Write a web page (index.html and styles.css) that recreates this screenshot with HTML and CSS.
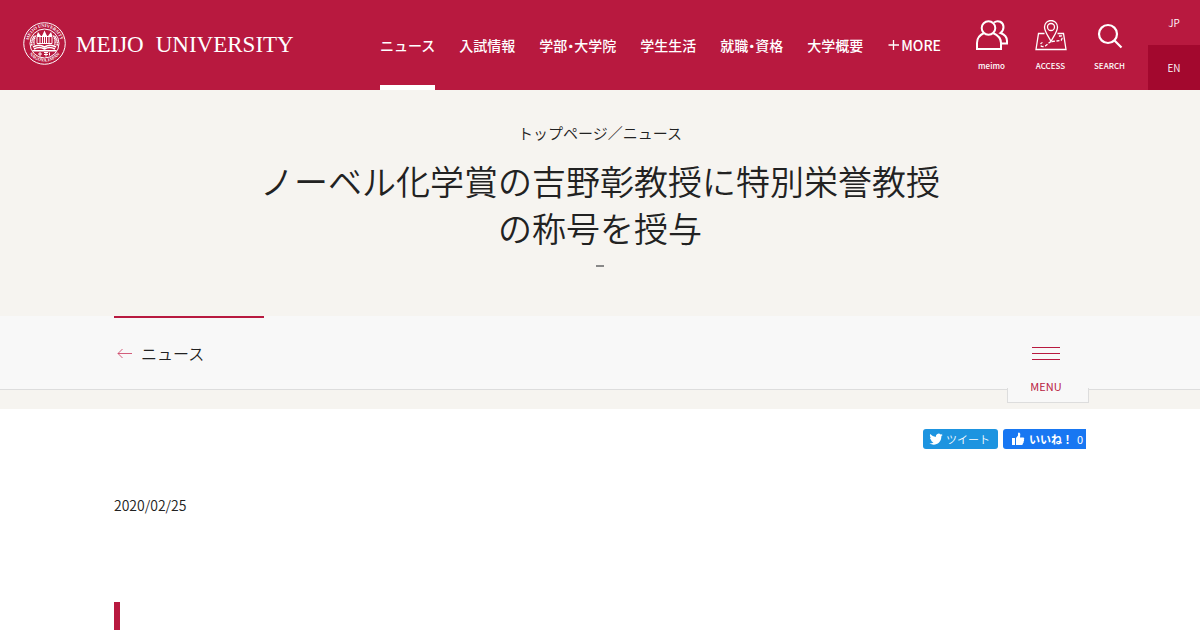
FILE: index.html
```html
<!DOCTYPE html>
<html lang="ja">
<head>
    <meta charset="UTF-8">
    <meta name="viewport" content="width=device-width, initial-scale=1.0">
    <title>ノーベル化学賞の吉野彰教授に特別栄誉教授の称号を授与</title>
    <link rel="stylesheet" href="styles.css">
</head>
<body>
    <!-- header -->
    <header class="header">
        <a href="#" class="logo">
            <svg class="seal" viewBox="0 0 86 86" aria-hidden="true">
                <defs>
                    <path id="ringTop" d="M12.5 52 A32 32 0 1 1 73.5 52"/>
                    <path id="ringBottom" d="M13 64 A37 37 0 0 0 73 64"/>
                </defs>
                <g fill="none" stroke="#fff">
                    <circle cx="43" cy="43" r="41.500" stroke-width="2"/>
                    <circle cx="43" cy="43" r="29" stroke-width="2"/>
                    <path d="M22 29 Q16 38 18 48 M64 29 Q70 38 68 48 M25 27 Q20 38 23 47 M61 27 Q66 38 63 47" stroke-width="3" stroke-dasharray="3 1"/>
                    <path d="M28 29 H58 V43 H28 Z M34 29 V43 M39 27 V43 M43 22 V43 M47 27 V43 M52 29 V43" stroke-width="2"/>
                    <path d="M20 50 Q32 43 43 50 Q54 43 66 50 M22 54 Q33 48 43 54 Q53 48 64 54" stroke-width="3"/>
                    <path d="M30 64 H38 M34 60 V69 M42 61 H50 M42 65 H50 M46 60 V69 M53 61 V67" stroke-width="2"/>
                </g>
                <path d="M43 17 L38 28 H48 Z M30 20 L27 28 H36 Z M56 20 L50 28 H59 Z M18 56 H68 L65 59 H21 Z" fill="#fff"/>
                <g class="seal-text">
                    <text><textPath href="#ringTop" startOffset="50%">MEIJO UNIVERSITY</textPath></text>
                    <text><textPath href="#ringBottom" startOffset="50%">NAGOYA JAPAN</textPath></text>
                </g>
            </svg>
            <span class="logo-text"><span>MEIJO</span> <span>UNIVERSITY</span></span>
        </a>
        <nav class="nav">
            <a href="#" class="current">ニュース</a>
            <a href="#">入試情報</a>
            <a href="#">学部・大学院</a>
            <a href="#">学生生活</a>
            <a href="#">就職・資格</a>
            <a href="#">大学概要</a>
            <a href="#" class="more">
                <svg width="12" height="12" viewBox="0 0 12 12" aria-hidden="true"><path d="M6.500 1V11M1.500 6H12" stroke="#fff" stroke-width="1.300"/></svg>
                MORE
            </a>
        </nav>
        <div class="tools">
            <a href="#">
                <svg width="32" height="32" viewBox="0 0 32 32" fill="none" stroke="#fff" stroke-width="2" aria-hidden="true">
                    <circle cx="12.500" cy="8" r="6.800"/>
                    <path d="M8 13 C3.500 15 1 18.500 1 23 V29 H25 V23 C25 18.500 21.500 15 17 13"/>
                    <path d="M18 2.500 C22 -0.500 27.500 2 27.500 7 C27.500 9.500 26.500 11.500 24.500 13 C29 14.500 31 17.500 31 21 V23.500 H25"/>
                </svg>
                meimo
            </a>
            <a href="#">
                <svg width="32" height="32" viewBox="0 0 32 32" fill="none" stroke="#fff" stroke-width="1.300" aria-hidden="true">
                    <path d="M9.500 13.500 H3.500 L1 29.500 H31 L28.500 13.500 H22.500"/>
                    <path d="M16 21.500 C14 17 9.500 12 9.500 7 A6.500 6.500 0 0 1 22.500 7 C22.500 12 18 17 16 21.500 Z"/>
                    <circle cx="16" cy="7" r="3.500"/>
                    <path d="M16 21.500 C13 23 12 26 8.500 26.500 C5 27 4.500 23.500 7.500 22.500 M17 21.500 L26 20.500 Q28 18 26.500 16 H23" stroke-dasharray="3 1.500"/>
                </svg>
                ACCESS
            </a>
            <a href="#">
                <svg width="32" height="32" viewBox="0 0 32 32" fill="none" stroke="#fff" stroke-width="2.200" aria-hidden="true">
                    <circle cx="14" cy="14" r="9"/>
                    <path d="M20.500 20.500 L27.500 27.500"/>
                </svg>
                SEARCH
            </a>
        </div>
        <div class="lang">
            <a href="#">JP</a>
            <a href="#" class="en">EN</a>
        </div>
    </header>

    <!-- title -->
    <section class="hero">
        <p class="breadcrumb"><a href="#">トップページ</a>／<a href="#">ニュース</a></p>
        <h1 class="title">ノーベル化学賞の吉野彰教授に特別栄誉教授の称号を授与</h1>
        <span class="dash"></span>
    </section>

    <!-- local nav -->
    <div class="local">
        <div class="local-bar">
            <div class="inner local-inner">
                <a href="#" class="back">
                    <svg width="16" height="10" viewBox="0 0 16 10" fill="none" stroke="#c9365a" stroke-width=".8" aria-hidden="true"><path d="M15 5.500H1M5.500 1L1 5.500L5.500 10"/></svg>
                    ニュース
                </a>
                <button type="button" class="menu">
                    <span class="menu-lines"></span>
                    MENU
                </button>
            </div>
        </div>
    </div>

    <!-- article -->
    <main class="inner article">
        <div class="share">
            <a href="#" class="tweet">
                <svg width="14" height="14" viewBox="0 0 24 24" fill="#fff" aria-hidden="true"><path d="M23.600 4.900c-.8.400-1.700.6-2.700.8 1-.6 1.700-1.500 2-2.600-.9.500-1.900.9-3 1.100A4.700 4.700 0 0 0 11.900 8.500C8 8.300 4.500 6.400 2.200 3.600c-1.200 2.100-.6 4.900 1.500 6.300-.8 0-1.500-.2-2.100-.6 0 2.200 1.500 4.300 3.800 4.700-.7.200-1.400.2-2.100.1.600 1.900 2.300 3.200 4.400 3.300a9.500 9.500 0 0 1-7 2C9.500 25.200 21.500 19.500 21.200 7.300c.9-.7 1.800-1.500 2.400-2.400z"/></svg>
                ツイート
            </a>
            <button type="button" class="like">
                <svg width="14" height="14" viewBox="0 0 14 14" fill="#fff" aria-hidden="true"><path d="M1 6h3v7H1zM5 6l2-2.500V1.500Q7 .5 8 .5t1.300 1.500L9 5.500h3.500q1.300 1 .3 2.300.8 1-.3 1.900.5 1-.6 1.700 0 1.600-1.400 1.600H5z"/></svg>
                <b>いいね！</b>
                <span>0</span>
            </button>
        </div>
        <time class="date" datetime="2020-02-25">2020/02/25</time>
        <div class="headline"></div>
    </main>
</body>
</html>
```
FILE: styles.css
```css
* {
    margin: 0;
    padding: 0;
    box-sizing: border-box;
}

body {
    font-family: "Noto Sans CJK JP", sans-serif;
    font-size: 14px;
    font-weight: 350;
    color: #222;
    background: #fff;
}

a {
    color: inherit;
    text-decoration: none;
}

button {
    border: none;
    font-family: inherit;
    cursor: pointer;
}

svg {
    display: block;
    flex-shrink: 0;
}

.inner {
    width: 81%;
    margin: 0 auto;
}

/* header */
.header {
    display: flex;
    height: 90px;
    padding-left: 23px;
    background: #b8193f;
    color: #fff;
    white-space: nowrap;
}

.logo {
    display: flex;
    align-items: center;
    gap: 10px;
}

.seal {
    width: 43px;
    height: 43px;
    margin-bottom: 3px;
    overflow: visible;
}

.seal-text {
    font-family: "Liberation Serif", serif;
    font-size: 9px;
    font-weight: bold;
    fill: #fff;
    text-anchor: middle;
}

.logo-text {
    display: flex;
    gap: 12px;
    font-family: "Liberation Serif", serif;
    font-size: 23px;
}

.nav {
    display: flex;
    gap: 24px;
    margin-left: auto;
    margin-right: 21px;
    font-weight: 500;
    font-feature-settings: "halt";
}

.nav a {
    display: flex;
    align-items: center;
    padding-top: 5px;
    border-bottom: 5px solid transparent;
}

.nav .current {
    border-color: #fff;
}

.nav .more {
    gap: 2px;
}

.tools {
    display: flex;
    padding-right: 9px;
}

.tools a {
    display: flex;
    flex-direction: column;
    align-items: center;
    gap: 6px;
    width: 59px;
    padding-top: 20px;
    font-size: 8px;
    font-weight: 500;
    line-height: 16px;
}

.lang {
    width: 52px;
    font-size: 10px;
    line-height: 45px;
    text-align: center;
}

.lang a {
    display: block;
}

.lang .en {
    background: #a3082e;
}

/* title */
.hero {
    padding: 32px 20px 49px;
    background: #f6f4f0;
    text-align: center;
}

.breadcrumb {
    font-size: 15px;
    line-height: 22px;
}

.title {
    max-width: 700px;
    margin: 13px auto 14px;
    font-size: 34px;
    font-weight: 350;
    line-height: 47px;
}

.dash {
    display: block;
    width: 8px;
    height: 2px;
    margin: 0 auto;
    background: #888;
}

/* local nav */
.local {
    padding-bottom: 19px;
    background: #f6f4f0;
}

.local-bar {
    background: #f8f8f8;
    border-bottom: 1px solid #ddd;
}

.local-inner {
    position: relative;
}

.back {
    display: flex;
    align-items: center;
    gap: 8px;
    width: 150px;
    height: 73px;
    padding-left: 3px;
    padding-bottom: 2px;
    border-top: 2px solid #b8193f;
    font-size: 16px;
}

/* tab hanging over the bottom border */
.menu {
    position: absolute;
    right: -3px;
    bottom: -14px;
    display: flex;
    flex-direction: column;
    align-items: center;
    gap: 17px;
    width: 82px;
    padding-right: 4px;
    padding-bottom: 7px;
    background: linear-gradient(#ddd, #ddd) left bottom / 1px 14px no-repeat,
                linear-gradient(#ddd, #ddd) right bottom / 1px 14px no-repeat,
                #f8f8f8;
    border-bottom: 1px solid #ddd;
    color: #b8193f;
    font-size: 11px;
    line-height: 18px;
}

.menu-lines {
    width: 28px;
    height: 13px;
    border-top: 1px solid #b8193f;
    border-bottom: 1px solid #b8193f;
    background: linear-gradient(#b8193f, #b8193f) center / 100% 1px no-repeat;
}

/* article */
.article {
    padding-top: 20px;
}

.share {
    display: flex;
    justify-content: flex-end;
    gap: 5px;
    font-size: 11px;
}

.tweet,
.like {
    display: flex;
    align-items: center;
    height: 20px;
    color: #fff;
    font-size: 11px;
    white-space: nowrap;
}

.tweet {
    gap: 3px;
    width: 75px;
    padding-left: 6px;
    background: #1d94e0;
    border-radius: 3px;
}

.like {
    gap: 4px;
    width: 83px;
    padding-left: 8px;
    background: #1877f2;
    border-radius: 3px 0 0 3px;
}

.date {
    display: block;
    margin-top: 45px;
    line-height: 22px;
}

.headline {
    min-height: 28px;
    margin-top: 86px;
    border-left: 6px solid #b8193f;
}
```
